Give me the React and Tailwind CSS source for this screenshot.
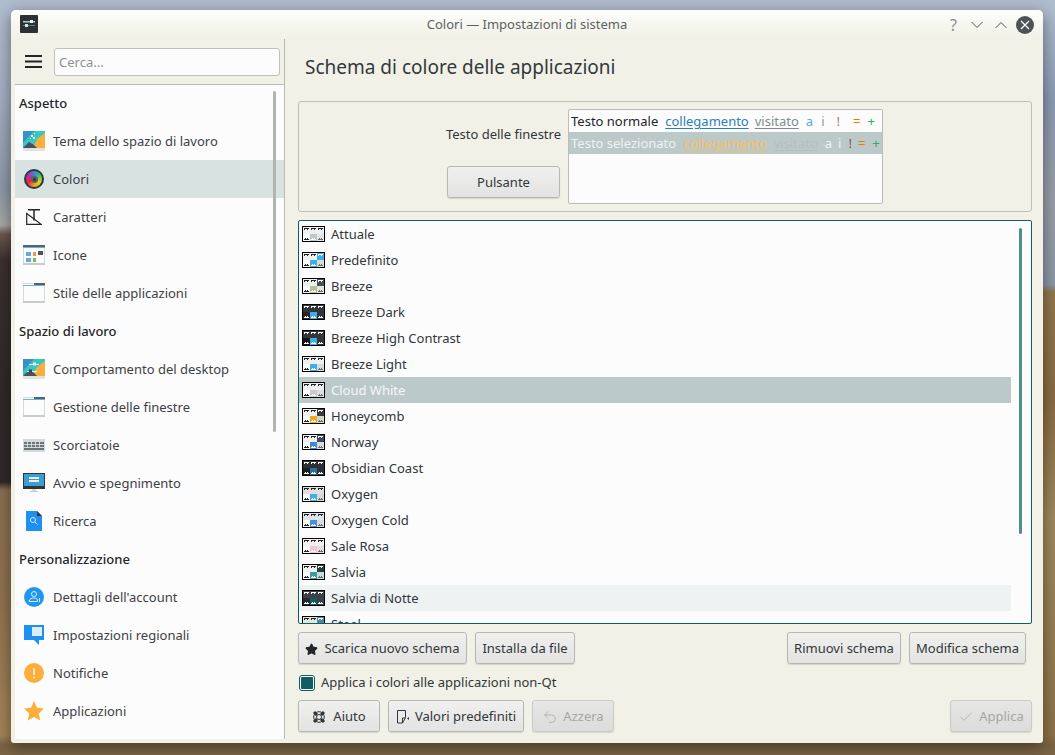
import React from 'react';
import { Star, Check, Undo2 } from 'lucide-react';

// small hand drawn icons for the sidebar
const Wallpaper = ({ sliders }) => (
  <svg width="22" height="20" viewBox="0 0 22 20">
    <rect width="22" height="20" fill="#38c6c4" />
    <path d="M0 0h11L0 12z" fill="#3a8fc4" />
    <path d="M22 2v18H8L14 8z" fill="#fcae3c" />
    <path d="M0 17l6-6 5 3 3 3z" fill="#47535c" />
    {sliders ? (
      <g fill="#e8f2f2">
        <rect x="6" y="5" width="10" height="1" />
        <rect x="10" y="3.5" width="3" height="3" />
        <rect x="4" y="12" width="10" height="1" />
        <rect x="6" y="10.5" width="3" height="3" fill="#39454c" />
      </g>
    ) : (
      <g fill="#e8f2f2">
        <rect x="8" y="4" width="2" height="2" />
        <rect x="10" y="6" width="2" height="2" />
        <rect x="7" y="7" width="1" height="1" />
        <rect x="11" y="2" width="1" height="1" />
      </g>
    )}
    <rect y="17" width="22" height="3" fill="#dfe3e3" />
  </svg>
);

const ColorWheel = () => (
  <div className="flex h-[20px] w-[20px] items-center justify-center rounded-full bg-[#31363b]">
    <div className="flex h-[16px] w-[16px] items-center justify-center rounded-full bg-[conic-gradient(#3d7fe0,#3fc56e,#d8d820,#f59a1d,#e6254c,#c02aa8,#3d7fe0)]">
      <div className="flex h-[7px] w-[7px] items-center justify-center rounded-full bg-[#5c5f62]">
        <div className="h-[3px] w-[3px] rounded-full bg-[#31363b]" />
      </div>
    </div>
  </div>
);

const FontIcon = () => (
  <svg width="16" height="16" viewBox="0 0 16 16" fill="none" stroke="#232629" strokeWidth="1.2">
    <path d="M2 .8h12M8 .8v10.700" strokeWidth="1.5" />
    <path d="M.7 4.500v10.800h14.500z" />
  </svg>
);

const WindowIcon = ({ grid }) => (
  <svg width="22" height="20" viewBox="0 0 22 20">
    <rect width="22" height="20" fill="#fcfcfc" />
    <rect width="22" height="1" fill="#d5dbdb" />
    <rect y="2" width="22" height="1" fill="#5eb5e8" />
    <rect x={grid ? 0 : 11} width={grid ? 22 : 11} height="2" fill="#5a6268" />
    <rect y="3" width="1" height="17" fill="#d5dbdb" />
    <rect x="21" y="3" width="1" height="17" fill="#d5dbdb" />
    <rect y="18" width="22" height="2" fill="#c4cccc" />
    {grid && (
      <g>
        <rect x="3" y="7" width="5" height="4" fill="#6aa9e0" />
        <rect x="10" y="7" width="3" height="4" fill="#f6934c" />
        <rect x="15" y="6" width="5" height="4" fill="#4a555c" />
        <rect x="3" y="13" width="5" height="4" fill="#6aa9e0" />
        <rect x="10" y="13" width="3" height="4" fill="#6fbf4c" />
      </g>
    )}
  </svg>
);

const Keyboard = () => (
  <svg width="22" height="13" viewBox="0 0 22 13">
    <rect width="22" height="13" fill="#d3dad9" />
    <g fill="#6b7378">
      <rect x="1" y="3" width="20" height="2" />
      <rect x="1" y="6" width="20" height="2" />
      <rect x="1" y="9" width="20" height="2" />
    </g>
    <g fill="#d3dad9">
      <rect x="4" y="3" width="1" height="5" />
      <rect x="8" y="3" width="1" height="5" />
      <rect x="12" y="3" width="1" height="5" />
      <rect x="16" y="3" width="1" height="5" />
    </g>
  </svg>
);

const Monitor = () => (
  <svg width="22" height="20" viewBox="0 0 22 20">
    <rect width="22" height="16" fill="#31363b" />
    <rect x="1" y="1" width="20" height="12" fill="#3d9dd0" />
    <rect x="6" y="4" width="10" height="2" fill="#e6f2f8" />
    <rect x="6" y="7" width="10" height="2" fill="#e6f2f8" />
    <rect x="9" y="16" width="4" height="2" fill="#d3dad9" />
    <rect x="7" y="18" width="8" height="1" fill="#c4cccc" />
  </svg>
);

const SearchDoc = () => (
  <svg width="16" height="20" viewBox="0 0 16 20">
    <path d="M0 0h11l5 5v15H0z" fill="#1e90f0" />
    <path d="M11 0l5 5h-5z" fill="#31363b" />
    <circle cx="7" cy="9" r="2.500" fill="none" stroke="#cfe8fb" strokeWidth="1" />
    <path d="M9 11l2.500 2.500" stroke="#cfe8fb" strokeWidth="1" />
  </svg>
);

const Account = () => (
  <svg width="20" height="20" viewBox="0 0 20 20">
    <circle cx="10" cy="10" r="10" fill="#2196f0" />
    <circle cx="10" cy="7" r="2.500" fill="none" stroke="#d6ecfc" strokeWidth="1" />
    <path d="M5 14.500c.5-3 3-3.500 5-3.500s3 .5 3.500 2v1.500z" fill="none" stroke="#d6ecfc" strokeWidth="1" />
    <rect x="15" y="11" width="1" height="4" fill="#d6ecfc" />
  </svg>
);

const Bubble = () => (
  <svg width="20" height="20" viewBox="0 0 20 20">
    <path d="M0 0h20v15h-5v5l-5-5H0z" fill="#1e90f0" />
    <rect x="8" y="2" width="10" height="9" fill="#dcecfa" />
  </svg>
);

const Bell = () => (
  <svg width="20" height="20" viewBox="0 0 20 20">
    <circle cx="10" cy="10" r="10" fill="#fcae3c" />
    <rect x="9" y="5" width="2" height="7" fill="#fde3b5" />
    <rect x="9" y="13.500" width="2" height="2" fill="#fde3b5" />
  </svg>
);

const StarIcon = () => (
  <svg width="20" height="20" viewBox="0 0 20 20">
    <path d="M10 0l3 6.800 7 .8-5.200 4.800 1.500 7.200L10 16.100 3.700 19.600l1.500-7.200L0 7.600l7-.8z" fill="#fcae3c" />
  </svg>
);

const Buoy = () => (
  <svg width="14" height="14" viewBox="0 0 14 14" fill="none" stroke="#31363b">
    <circle cx="7" cy="7" r="5.300" strokeWidth="1" />
    <circle cx="7" cy="7" r="2.500" strokeWidth="1" />
    <path d="M2 2l3 3M12 2L9 5M2 12l3-3M12 12L9 9" strokeWidth="3" />
  </svg>
);

const sections = [
  {
    title: 'Aspetto',
    items: [
      { label: 'Tema dello spazio di lavoro', icon: <Wallpaper /> },
      { label: 'Colori', icon: <ColorWheel />, active: true },
      { label: 'Caratteri', icon: <FontIcon /> },
      { label: 'Icone', icon: <WindowIcon grid /> },
      { label: 'Stile delle applicazioni', icon: <WindowIcon /> },
    ],
  },
  {
    title: 'Spazio di lavoro',
    items: [
      { label: 'Comportamento del desktop', icon: <Wallpaper sliders /> },
      { label: 'Gestione delle finestre', icon: <WindowIcon /> },
      { label: 'Scorciatoie', icon: <Keyboard /> },
      { label: 'Avvio e spegnimento', icon: <Monitor /> },
      { label: 'Ricerca', icon: <SearchDoc /> },
    ],
  },
  {
    title: 'Personalizzazione',
    items: [
      { label: "Dettagli dell'account", icon: <Account /> },
      { label: 'Impostazioni regionali', icon: <Bubble /> },
      { label: 'Notifiche', icon: <Bell /> },
      { label: 'Applicazioni', icon: <StarIcon /> },
    ],
  },
];

// colours of each scheme thumbnail: 3 cells on top, 3 on bottom
const schemes = [
  { name: 'Attuale', top: ['#eff0f1', '#eff0f1', '#eff0f1'], bottom: ['#fcfcfc', '#bcc9c9', '#e3e6e3'] },
  { name: 'Predefinito', top: ['#eff0f1', '#eff0f1', '#3daee9'], bottom: ['#fcfcfc', '#3daee9', '#d8dcdc'] },
  { name: 'Breeze', top: ['#eff0f1', '#eff0f1', '#475057'], bottom: ['#fcfcfc', '#b6c09a', '#e3e6d8'] },
  { name: 'Breeze Dark', top: ['#31363b', '#31363b', '#31363b'], bottom: ['#232629', '#3daee9', '#31363b'] },
  { name: 'Breeze High Contrast', top: ['#31363b', '#31363b', '#31363b'], bottom: ['#111111', '#3daee9', '#31363b'] },
  { name: 'Breeze Light', top: ['#eff0f1', '#eff0f1', '#eff0f1'], bottom: ['#fcfcfc', '#3daee9', '#d8dcdc'] },
  { name: 'Cloud White', top: ['#eeeeee', '#eeeeee', '#eeeeee'], bottom: ['#fcfcfc', '#c4cbcb', '#dddddd'], selected: true },
  { name: 'Honeycomb', top: ['#eff0f1', '#eff0f1', '#3a3a3a'], bottom: ['#fcfcfc', '#f0a81e', '#d8d4c4'] },
  { name: 'Norway', top: ['#eff0f1', '#eff0f1', '#3a4a60'], bottom: ['#fcfcfc', '#4488cc', '#d8dcdc'] },
  { name: 'Obsidian Coast', top: ['#2a3036', '#2a3036', '#2a3036'], bottom: ['#1a1e22', '#2c6e9c', '#2a3036'] },
  { name: 'Oxygen', top: ['#e0dfde', '#e0dfde', '#e0dfde'], bottom: ['#fcfcfc', '#3daee9', '#d8d8d8'] },
  { name: 'Oxygen Cold', top: ['#e0e4e8', '#e0e4e8', '#e0e4e8'], bottom: ['#fcfcfc', '#4a90d9', '#d8dcdc'] },
  { name: 'Sale Rosa', top: ['#f4eef0', '#f4eef0', '#f4eef0'], bottom: ['#fcfcfc', '#f0c8d4', '#e8dce0'] },
  { name: 'Salvia', top: ['#eff0f1', '#eff0f1', '#20403f'], bottom: ['#fcfcfc', '#3a9a98', '#c8dcd8'] },
  { name: 'Salvia di Notte', top: ['#3b4045', '#3b4045', '#3b4045'], bottom: ['#24282c', '#0f5e60', '#3b4045'], hover: true },
  { name: 'Steel', top: ['#e6e6e0', '#e6e6e0', '#4a8aa4'], bottom: ['#fcfcfc', '#4a8aa4', '#d8dcdc'] },
];

const isDark = (c) => parseInt(c.slice(1, 3), 16) < 120;

const SchemeThumb = ({ top, bottom }) => (
  <svg width="23" height="16" viewBox="0 0 23 16" className="shrink-0">
    <rect width="23" height="16" fill="#000" />
    {top.map((c, i) => {
      const ink = isDark(c) || c === '#3daee9' ? '#fcfcfc' : '#232629';
      return (
        <g key={i}>
          <rect x={1 + i * 7} y="1" width="7" height="7" fill={c} />
          <rect x={2 + i * 7} y="2" width="5" height="1" fill={ink} />
          <rect x={2 + i * 7} y="3" width="1" height="1" fill={ink} />
          <rect x={5 + i * 7} y="3" width="1" height="1" fill={ink} />
        </g>
      );
    })}
    {bottom.map((c, i) => {
      const ink = i === 1 || isDark(c) ? '#fcfcfc' : i === 2 ? '#6b7378' : '#232629';
      return (
        <g key={i}>
          <rect x={1 + i * 7} y="8" width="7" height="7" fill={c} />
          <rect x={2 + i * 7} y="13" width="5" height="1" fill={ink} />
          <rect x={3 + i * 7} y="12" width="1" height="1" fill={ink} />
          <rect x={5 + i * 7} y="12" width="1" height="1" fill={ink} />
        </g>
      );
    })}
  </svg>
);

const Btn = ({ children, className = '', disabled }) => (
  <button
    className={`flex h-8 items-center justify-center gap-[5px] rounded-[3px] border bg-gradient-to-b pt-[2px] shadow-[0_1px_1px_rgba(0,0,0,0.12)] ${disabled ? 'border-[#c9cbc6] from-[#e6e7e4] to-[#dcdddb] text-[#a4a7a6]' : 'border-[#b6b8b2] from-[#f0f1ee] to-[#e3e4e1] text-[#31363b]'} ${className}`}
  >
    {children}
  </button>
);

export default function App() {
  return (
    <div className="h-[755px] w-[1055px] overflow-hidden pl-[11px] pt-[10px] font-['Noto_Sans',sans-serif] text-[13px] text-[#31363b] [background:linear-gradient(180deg,#b0bccf_0px,#b0bccf_10px,#a3afc3_100px,#8d99a7_190px,#a9a9a6_225px,#6b5a50_234px,#3b312f_260px,#2f2927_400px,#30292a_482px,#8b7050_490px,#8f7351_600px,#a58558_735px,#7a6444_745px,#7a6444_755px)_left/50%_100%_no-repeat,linear-gradient(180deg,#b0bccf_0px,#b0bccf_10px,#8d9bb5_100px,#9a9ea8_200px,#8d98a8_285px,#93774c_292px,#8a6c42_400px,#a08a5c_520px,#8f7348_735px,#7a6444_745px,#7a6444_755px)_right/100%_100%_no-repeat]">
      <div className="flex h-[733px] w-[1032px] flex-col overflow-hidden rounded-t-[5px] rounded-b-[3px] bg-[#f1f1e7] shadow-[0_4px_16px_rgba(0,0,0,0.45)]">
        {/* title bar */}
        <div className="flex h-[29px] shrink-0 items-center bg-gradient-to-b from-[#fdfdfb] to-[#f1f1e7] pl-[9px] pr-[9px]">
          <svg width="18" height="18" viewBox="0 0 18 18" className="mt-[-1px]">
            <rect width="18" height="18" rx="1" fill="#2c3136" />
            <rect x="3" y="6" width="12" height="1.500" fill="#b8c4c8" />
            <rect x="10" y="5" width="3" height="3" fill="#f0f4f4" />
            <rect x="3" y="10" width="12" height="1" fill="#4c8a90" />
            <rect x="5" y="9" width="3" height="3" fill="#d8e4e4" />
          </svg>
          <div className="flex-1 pl-[66px] text-center text-[#5d6264]">Colori — Impostazioni di sistema</div>
          <div className="flex items-center">
            <span className="mr-[14px] text-[16px] leading-none text-[#8a8d8f]">?</span>
            <svg width="12" height="8" viewBox="0 0 12 8" fill="none" stroke="#4d5257" strokeWidth="1" className="mr-[12px]">
              <path d="M.5 1L6 6.500 11.500 1" />
            </svg>
            <svg width="12" height="8" viewBox="0 0 12 8" fill="none" stroke="#4d5257" strokeWidth="1" className="mr-[9px]">
              <path d="M.5 7L6 1.500 11.500 7" />
            </svg>
            <svg width="18" height="18" viewBox="0 0 18 18">
              <circle cx="9" cy="9" r="9" fill="#4d5257" />
              <path d="M5 5l8 8M13 5l-8 8" stroke="#fcfcfc" strokeWidth="1.300" />
            </svg>
          </div>
        </div>

        <div className="flex min-h-0 flex-1">
          {/* sidebar */}
          <div className="mb-[4px] flex w-[274px] shrink-0 flex-col border-r border-[#b8bab4] pl-[4px]">
            <div className="flex h-[45px] shrink-0 items-center pl-[10px]">
              <svg width="17" height="13" viewBox="0 0 17 13" fill="#232629">
                <rect width="17" height="2" />
                <rect y="5.500" width="17" height="2" />
                <rect y="11" width="17" height="2" />
              </svg>
              <input
                readOnly
                placeholder="Cerca..."
                className="ml-[12px] h-[28px] w-[226px] rounded-[3px] border border-[#bfc1bb] bg-[#fcfcfc] px-[4px] text-[13px] outline-none placeholder:text-[#8b9192]"
              />
            </div>
            <div className="relative min-h-0 flex-1 overflow-hidden border-t border-[#b8bab4] bg-[#fcfcfc]">
              <div className="-mt-px">
                {sections.map((s) => (
                  <div key={s.title}>
                    <div className="flex h-[38px] items-center pl-[4px] pt-[2px] font-medium text-[#232629]">{s.title}</div>
                    {s.items.map((it) => (
                      <div key={it.label} className={`flex h-[38px] items-center ${it.active ? 'bg-[#d7e2e1]' : ''}`}>
                        <div className="flex w-[34px] shrink-0 items-center justify-center pl-[4px]">{it.icon}</div>
                        <span className="pl-[4px] pt-[2px] text-[#3c4145]">{it.label}</span>
                      </div>
                    ))}
                  </div>
                ))}
              </div>
              {/* scrollbar */}
              <div className="absolute right-[8px] top-[6px] h-[341px] w-[3px] rounded-sm bg-[#b2b4b2]" />
            </div>
          </div>

          {/* main panel */}
          <div className="flex min-w-0 flex-1 flex-col pl-[13px] pr-[11px]">
            <div className="flex h-[62px] shrink-0 items-center pb-[5px] pl-[7px] text-[19px] leading-none text-[#33383c]">Schema di colore delle applicazioni</div>

            {/* preview */}
            <div className="flex h-[111px] shrink-0 rounded-[3px] border border-[#bfc1b6]">
              <div className="flex w-[269px] shrink-0 flex-col items-end pr-[7px]">
                <span className="mt-[23px] h-[18px] leading-[18px]">Testo delle finestre</span>
                <Btn className="mr-px mt-[23px] w-[113px]">Pulsante</Btn>
              </div>
              <div className="mt-[7px] h-[95px] w-[315px] rounded-[2px] border border-[#bcbdb8] bg-[#fcfcfc]">
                <div className="flex h-[22px] items-center whitespace-nowrap pl-[2px] pt-[2px] text-[#232629]">
                  <span>Testo normale</span>
                  <span className="ml-[7px] text-[#2980b9] underline underline-offset-2">collegamento</span>
                  <span className="ml-[6px] text-[#7f8c8d] underline underline-offset-2">visitato</span>
                  <span className="ml-[7px] text-[#5aa9e0]">a</span>
                  <span className="ml-[8px] text-[#8d9a9b]">i</span>
                  <span className="ml-[12px] text-[#a08078]">!</span>
                  <span className="ml-[13px] text-[#f67400]">=</span>
                  <span className="ml-[7px] text-[#27ae60]">+</span>
                </div>
                <div className="flex h-[22px] items-center whitespace-nowrap bg-[#bcc9c9] pl-[2px] pt-[2px] text-[#eef2f2]">
                  <span>Testo selezionato</span>
                  <span className="ml-[7px] text-[#fbbd5c] underline underline-offset-2">collegamento</span>
                  <span className="ml-[7px] text-[#b4c0c0] underline underline-offset-2">visitato</span>
                  <span className="ml-[7px]">a</span>
                  <span className="ml-[6px]">i</span>
                  <span className="ml-[7px] text-[#7b5a58]">!</span>
                  <span className="ml-[6px] text-[#f67400]">=</span>
                  <span className="ml-[7px] text-[#27ae60]">+</span>
                </div>
              </div>
            </div>

            {/* scheme list */}
            <div className="relative mt-[8px] h-[404px] shrink-0 overflow-hidden rounded-[2px] border border-[#0f5e60] bg-[#fcfcfc]">
              <div className="w-[712px]">
                {schemes.map((s) => (
                  <div
                    key={s.name}
                    className={`flex h-[26px] items-center pl-[3px] ${s.selected ? 'bg-[#bcc9c9] text-[#f4f7f7]' : s.hover ? 'bg-[#eef2f2]' : ''}`}
                  >
                    <SchemeThumb top={s.top} bottom={s.bottom} />
                    <span className="ml-[6px] pt-[2px]">{s.name}</span>
                  </div>
                ))}
              </div>
              <div className="absolute right-[9px] top-[7px] h-[306px] w-[3px] rounded-sm bg-[#4f8f8c]" />
            </div>

            <div className="mt-[8px] flex shrink-0 gap-[8px]">
              <Btn className="w-[169px]"><Star size={13} fill="#232629" stroke="#232629" /><span className="ml-px">Scarica nuovo schema</span></Btn>
              <Btn className="w-[100px]">Installa da file</Btn>
              <Btn className="ml-auto w-[114px]">Rimuovi schema</Btn>
              <Btn className="mr-[6px] w-[117px]">Modifica schema</Btn>
            </div>

            <label className="mt-[10px] flex h-[18px] shrink-0 items-center">
              <span className="ml-px flex h-[16px] w-[16px] items-center justify-center rounded-[3px] border border-[#0f5e60] bg-[#fcfcfc]">
                <span className="h-[12px] w-[12px] rounded-[1px] bg-[#0f5e60]" />
              </span>
              <span className="ml-[6px]">Applica i colori alle applicazioni non-Qt</span>
            </label>

            <div className="mt-[8px] flex shrink-0 gap-[8px]">
              <Btn className="w-[82px]"><Buoy /><span className="ml-[2px]">Aiuto</span></Btn>
              <Btn className="w-[136px]">
                <svg width="14" height="14" viewBox="0 0 14 14" fill="none" stroke="#31363b" strokeWidth="1">
                  <path d="M1.500.5h8v7l-3 5.500h-5z" />
                  <path d="M9.500 8h-3v5" />
                  <path d="M13 7l-2 1.500 2 1.500z" fill="#31363b" stroke="none" />
                </svg>
                Valori predefiniti
              </Btn>
              <Btn disabled className="w-[82px]"><Undo2 size={16} strokeWidth={1.1} />Azzera</Btn>
              <Btn disabled className="ml-auto w-[82px]"><Check size={16} strokeWidth={1.1} />Applica</Btn>
            </div>
          </div>
        </div>
      </div>
    </div>
  );
}
